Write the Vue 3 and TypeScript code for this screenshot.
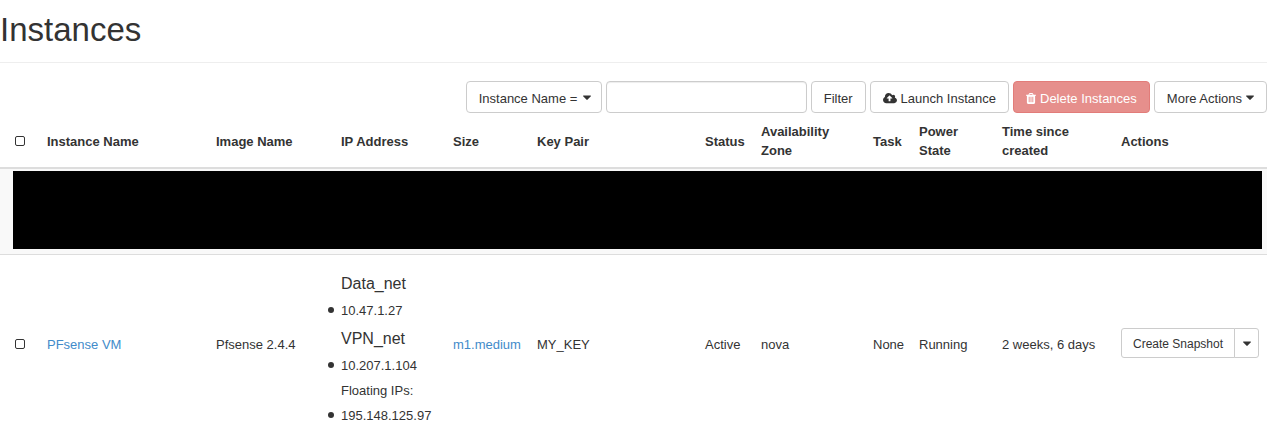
<script setup lang="ts">
import { ref } from 'vue'

interface Network {
  name: string
  fixed: string[]
  floating: string[]
}
interface Instance {
  name: string
  image: string
  networks: Network[]
  size: string
  keyPair: string
  status: string
  zone: string
  task: string
  power: string
  age: string
}

const columns = [
  { key: 'name', label: 'Instance Name' },
  { key: 'image', label: 'Image Name' },
  { key: 'ip', label: 'IP Address' },
  { key: 'size', label: 'Size' },
  { key: 'keypair', label: 'Key Pair' },
  { key: 'status', label: 'Status' },
  { key: 'zone', label: 'Availability Zone' },
  { key: 'task', label: 'Task' },
  { key: 'power', label: 'Power State' },
  { key: 'age', label: 'Time since created' },
  { key: 'actions', label: 'Actions' },
]

const instances: Instance[] = [
  {
    name: 'PFsense VM',
    image: 'Pfsense 2.4.4',
    networks: [
      { name: 'Data_net', fixed: ['10.47.1.27'], floating: [] },
      { name: 'VPN_net', fixed: ['10.207.1.104'], floating: ['195.148.125.97'] },
    ],
    size: 'm1.medium',
    keyPair: 'MY_KEY',
    status: 'Active',
    zone: 'nova',
    task: 'None',
    power: 'Running',
    age: '2 weeks, 6 days',
  },
]

const query = ref('')
const filterField = ref('name')
const selected = ref<string[]>([])

const caretPath =
  'M1024 896q0 26-19 45l-448 448q-19 19-45 19t-45-19l-448-448q-19-19-19-45t19-45 45-19h896q26 0 45 19t19 45z'
</script>

<template>
  <main class="page">
    <h1 class="title">Instances</h1>

    <form class="toolbar" @submit.prevent>
      <span class="field-select">
        <select v-model="filterField" class="btn" aria-label="Filter field">
          <option value="name">Instance Name =</option>
        </select>
        <svg class="caret" viewBox="0 0 1024 1792" aria-hidden="true"><path :d="caretPath" /></svg>
      </span>
      <input v-model="query" class="search" type="text" aria-label="Filter value" />
      <button class="btn" type="submit">Filter</button>
      <button class="btn" type="button">
        <svg class="cloud" viewBox="0 0 1920 1792" aria-hidden="true">
          <path
            d="M1280 864q0-14-9-23l-352-352q-9-9-23-9t-23 9l-351 351q-10 12-10 24 0 14 9 23t23 9h224v352q0 13 9.5 22.5t22.5 9.5h192q13 0 22.5-9.5t9.5-22.5v-352h224q13 0 22.5-9.5t9.5-22.5zm640 288q0 159-112.5 271.5t-271.5 112.5h-1088q-185 0-316.5-131.5t-131.5-316.5q0-130 70-240t188-165q-2-30-2-43 0-212 150-362t362-150q156 0 285.5 87t188.5 231q71-62 166-62 106 0 181 75t75 181q0 76-41 138 130 31 213.5 135.5t83.5 238.5z"
          />
        </svg>
        Launch Instance
      </button>
      <button class="btn danger" type="button" :disabled="selected.length === 0">
        <svg class="trash" viewBox="0 0 1408 1792" aria-hidden="true">
          <path
            d="M512 1376v-704q0-14-9-23t-23-9h-64q-14 0-23 9t-9 23v704q0 14 9 23t23 9h64q14 0 23-9t9-23zm256 0v-704q0-14-9-23t-23-9h-64q-14 0-23 9t-9 23v704q0 14 9 23t23 9h64q14 0 23-9t9-23zm256 0v-704q0-14-9-23t-23-9h-64q-14 0-23 9t-9 23v704q0 14 9 23t23 9h64q14 0 23-9t9-23zm-544-992h448l-48-117q-7-9-17-11h-317q-10 2-17 11zm928 32v64q0 14-9 23t-23 9h-96v948q0 83-47 143.5t-113 60.5h-832q-66 0-113-58.5t-47-141.5v-952h-96q-14 0-23-9t-9-23v-64q0-14 9-23t23-9h309l70-167q15-37 54-63t79-26h320q40 0 79 26t54 63l70 167h309q14 0 23 9t9 23z"
          />
        </svg>
        Delete Instances
      </button>
      <button class="btn" type="button" aria-haspopup="menu">
        More Actions
        <svg class="caret" viewBox="0 0 1024 1792" aria-hidden="true"><path :d="caretPath" /></svg>
      </button>
    </form>

    <table class="grid">
      <colgroup>
        <col class="c-check" />
        <col v-for="c in columns" :key="c.key" :class="'c-' + c.key" />
      </colgroup>
      <thead>
        <tr>
          <th class="check"><input type="checkbox" aria-label="Select all instances" /></th>
          <th v-for="c in columns" :key="c.key" scope="col">{{ c.label }}</th>
        </tr>
      </thead>
      <tbody>
        <tr class="striped">
          <td class="masked" :colspan="columns.length + 1"><div class="mask"></div></td>
        </tr>
        <tr v-for="i in instances" :key="i.name">
          <td class="check">
            <input v-model="selected" type="checkbox" :value="i.name" :aria-label="'Select ' + i.name" />
          </td>
          <td><a href="#">{{ i.name }}</a></td>
          <td>{{ i.image }}</td>
          <td class="ips">
            <template v-for="n in i.networks" :key="n.name">
              <h4>{{ n.name }}</h4>
              <ul>
                <li v-for="ip in n.fixed" :key="ip">{{ ip }}</li>
                <template v-if="n.floating.length">
                  <li class="plain">Floating IPs:</li>
                  <li v-for="ip in n.floating" :key="ip">{{ ip }}</li>
                </template>
              </ul>
            </template>
          </td>
          <td><a href="#">{{ i.size }}</a></td>
          <td>{{ i.keyPair }}</td>
          <td>{{ i.status }}</td>
          <td>{{ i.zone }}</td>
          <td>{{ i.task }}</td>
          <td>{{ i.power }}</td>
          <td>{{ i.age }}</td>
          <td class="actions">
            <div class="group">
              <button class="btn small" type="button">Create Snapshot</button>
              <button class="btn small toggle" type="button" aria-label="More actions">
                <svg class="caret" viewBox="0 0 1024 1792" aria-hidden="true"><path :d="caretPath" /></svg>
              </button>
            </div>
          </td>
        </tr>
      </tbody>
    </table>
  </main>
</template>

<style>
body {
  margin: 0;
  background: #fff;
}
</style>

<style scoped>
.page {
  padding-right: 2px;
  color: #333;
  font: 13px/19px "Liberation Sans", Arial, sans-serif;
}
.title {
  margin: 0 0 18px;
  padding: 12px 0 14px;
  border-bottom: 1px solid #eee;
  font-size: 33px;
  font-weight: 400;
  line-height: 36px;
}
.toolbar {
  display: flex;
  justify-content: flex-end;
  gap: 4px;
  margin-bottom: 1px;
}
.btn {
  display: inline-flex;
  align-items: center;
  justify-content: center;
  gap: 4px;
  box-sizing: border-box;
  height: 32px;
  margin: 0;
  padding: 2px 12px 0;
  border: 1px solid #ccc;
  border-radius: 4px;
  background: #fff;
  color: #333;
  font: inherit;
  white-space: nowrap;
}
.btn svg {
  flex: none;
}
svg {
  height: 13px;
  fill: currentColor;
}
.caret {
  width: 8px;
  height: 14px;
}
.btn .caret {
  margin-bottom: 4px;
}
.cloud {
  width: 14px;
}
.trash {
  width: 10px;
}
.danger {
  border-color: #e27c79;
  background: #e68f8c;
  color: #fff;
}
.field-select {
  position: relative;
  display: inline-flex;
}
.field-select select {
  appearance: none;
  padding-right: 23px;
}
.field-select .caret {
  position: absolute;
  top: 8px;
  right: 11px;
  pointer-events: none;
}
.search {
  box-sizing: border-box;
  width: 201px;
  height: 32px;
  padding: 6px 12px;
  border: 1px solid #ccc;
  border-radius: 4px;
  background: #fff;
  box-shadow: inset 0 1px 1px rgba(0, 0, 0, 0.075);
  color: #555;
  font: inherit;
}
.grid {
  width: 100%;
  border-collapse: separate;
  border-spacing: 0;
  table-layout: fixed;
}
.c-check { width: 39px; }
.c-name { width: 169px; }
.c-image { width: 125px; }
.c-ip { width: 112px; }
.c-size { width: 84px; }
.c-status { width: 56px; }
.c-zone { width: 112px; }
.c-task { width: 46px; }
.c-power { width: 83px; }
.c-age { width: 119px; }
.c-actions { width: 154px; }
th,
td {
  padding: 8px;
  text-align: left;
  vertical-align: middle;
}
th {
  padding-bottom: 7px;
  border-bottom: 2px solid #ddd;
}
tbody tr + tr td {
  border-top: 1px solid #ddd;
}
.check {
  padding-left: 15px;
}
.check input {
  appearance: none;
  display: block;
  box-sizing: border-box;
  width: 10px;
  height: 10px;
  margin: 0;
  border: 1px solid #333;
  border-radius: 2px;
}
.check input:checked {
  background: #333;
}
.striped {
  background: #f9f9f9;
}
.masked {
  padding: 2px 5px 5px 13px;
}
.mask {
  height: 78px;
  background: #000;
}
a {
  color: #428bca;
  text-decoration: none;
}
td.ips {
  padding-top: 13px;
  padding-bottom: 5px;
}
td.actions {
  padding-bottom: 10px;
}
h4 {
  margin: 1px 0 0;
  font-size: 16px;
  font-weight: 400;
  line-height: 29px;
}
ul {
  margin: 0;
  padding: 0;
  list-style: none;
}
li {
  position: relative;
  line-height: 25px;
}
li:not(.plain)::before {
  content: "";
  position: absolute;
  top: 9px;
  left: -13px;
  width: 6px;
  height: 6px;
  border-radius: 50%;
  background: #333;
}
.group {
  display: flex;
}
.small {
  flex: 1;
  height: 30px;
  padding: 2px 10px 0;
  border-radius: 3px 0 0 3px;
  font-size: 12px;
}
.toggle {
  flex: none;
  width: 25px;
  margin-left: -1px;
  padding: 2px 0 0;
  border-radius: 0 3px 3px 0;
}
</style>
